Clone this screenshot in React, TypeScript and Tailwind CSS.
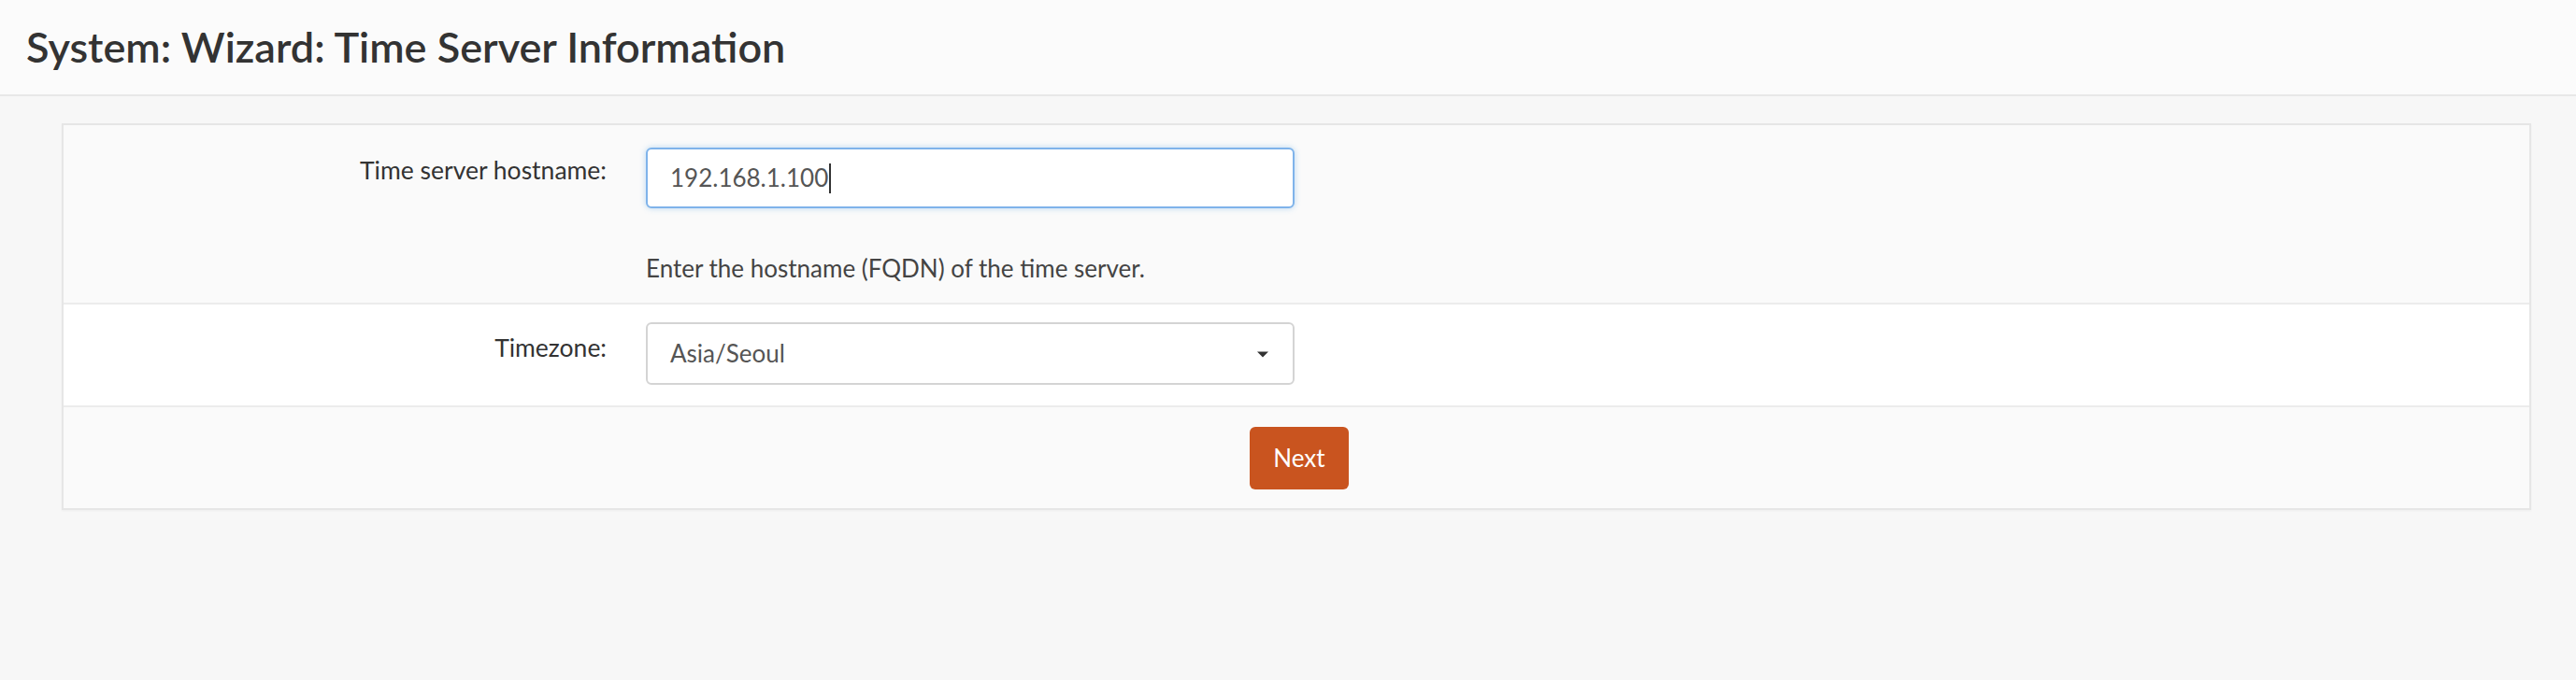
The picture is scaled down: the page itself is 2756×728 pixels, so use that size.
export default function App() {
  return (
    <div
      className="min-h-[728px] w-full bg-[#f7f7f7] text-[#333]"
      style={{ fontFamily: '"Lato", "Liberation Sans", sans-serif' }}
    >
      <header className="flex h-[103px] items-center border-b-2 border-[#e8e8e8] bg-[#fbfbfb] pl-[28px]">
        <h1 className="text-[45px] font-semibold leading-none text-[#333]">
          System: Wizard: Time Server Information
        </h1>
      </header>

      <main className="pl-[66px] pr-[48px] pt-[29px]">
        <div className="border-2 border-[#e6e6e6] shadow-[0_1px_2px_rgba(0,0,0,0.04)]">
          {/* hostname */}
          <div className="flex h-[192px] border-b-2 border-[#ececec] bg-[#fafafa]">
            <div className="w-[582px] shrink-0 pr-[1px] pt-[29px] text-right text-[26.5px] text-[#333]">
              Time server hostname:
            </div>
            <div className="flex flex-col pl-[41px] pt-[24px]">
              <div className="flex h-[65px] w-[694px] items-center rounded-[6px] border-2 border-[#7fb3ea] bg-white px-[24px] text-[26px] text-[#555] shadow-[0_0_6px_rgba(102,175,233,0.45)]">
                192.168.1.100
                <span className="ml-[1px] inline-block h-[32px] w-[2px] bg-[#333]" />
              </div>
              <div className="mt-[45px] text-[26px] text-[#444]">
                Enter the hostname (FQDN) of the time server.
              </div>
            </div>
          </div>

          {/* timezone */}
          <div className="flex h-[110px] border-b-2 border-[#ececec] bg-white">
            <div className="w-[582px] shrink-0 pr-[1px] pt-[27px] text-right text-[26.5px] text-[#333]">
              Timezone:
            </div>
            <div className="pl-[41px] pt-[19px]">
              <div className="flex h-[67px] w-[694px] items-center justify-between rounded-[6px] border-2 border-[#d4d4d4] bg-white pl-[24px] pr-[26px] text-[26px] text-[#555]">
                <span>Asia/Seoul</span>
                <svg width="12" height="8" viewBox="0 0 12 8">
                  <path d="M0 1.5 H12 L6 7.5 Z" fill="#333" />
                </svg>
              </div>
            </div>
          </div>

          {/* actions */}
          <div className="flex h-[108px] items-center justify-center bg-[#fafafa] pl-[6px]">
            <button className="h-[67px] w-[106px] rounded-[6px] bg-[#c9541f] text-[26px] text-white">
              Next
            </button>
          </div>
        </div>
      </main>
    </div>
  );
}
